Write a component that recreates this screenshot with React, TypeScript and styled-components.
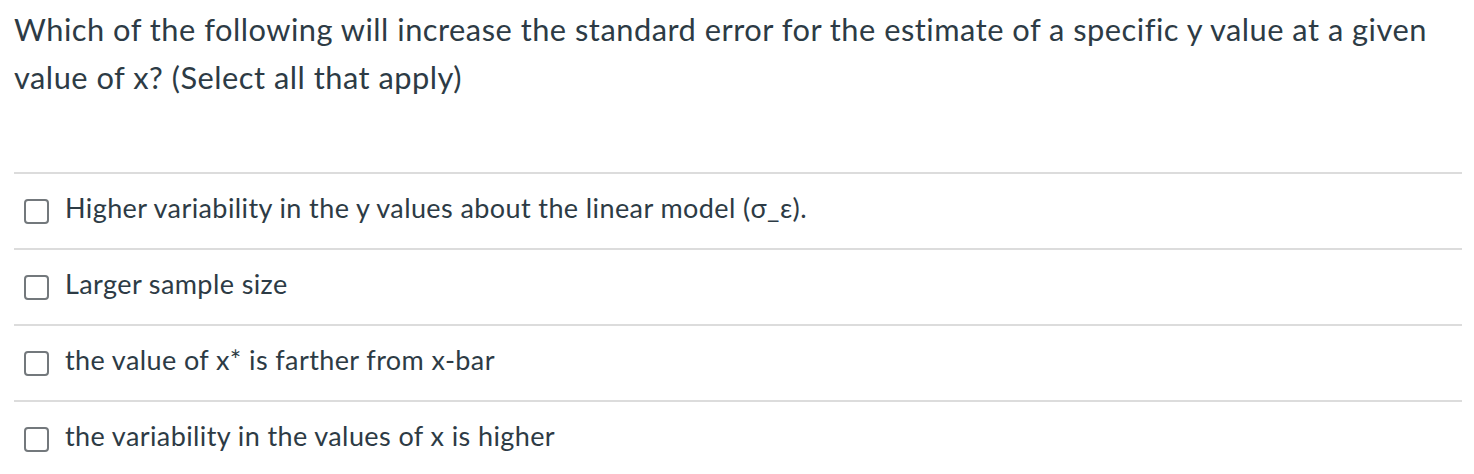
import styled, { createGlobalStyle } from 'styled-components';

const options = [
  'Higher variability in the y values about the linear model (σ_ε).',
  'Larger sample size',
  'the value of x* is farther from x-bar',
  'the variability in the values of x is higher',
];

const GlobalStyle = createGlobalStyle`
  body {
    margin: 0;
    background: #fff;
    font-family: Lato, "Open Sans", sans-serif;
    color: #2d3b45;
  }
`;

const Question = () => {
  return (
    <Wrapper>
      <GlobalStyle />
      <QuestionText>
        Which of the following will increase the standard error for the estimate of a specific y value at a given
        value of x? (Select all that apply)
      </QuestionText>
      <AnswerList>
        {options.map((text, index) => (
          <AnswerRow key={index}>
            <CheckBox type="checkbox" />
            <AnswerLabel>{text}</AnswerLabel>
          </AnswerRow>
        ))}
      </AnswerList>
    </Wrapper>
  );
};

const Wrapper = styled.div`
  padding: 0 12px 0 14px;
`;

const QuestionText = styled.p`
  margin: 0;
  padding-top: 6px;
  font-size: 30.8px;
  line-height: 48px;
  letter-spacing: 0.5px;
`;

const AnswerList = styled.div`
  margin-top: 70px;
  display: flex;
  flex-direction: column;
`;

const AnswerRow = styled.label`
  display: flex;
  align-items: center;
  gap: 16px;
  height: 74px;
  padding-left: 10px;
  border-top: 2px solid #dcdcdc;
`;

const CheckBox = styled.input`
  appearance: none;
  margin: 0;
  width: 25px;
  height: 25px;
  box-sizing: border-box;
  border: 2px solid #73787c;
  border-radius: 4px;
  background: #fff;
  flex-shrink: 0;
`;

const AnswerLabel = styled.span`
  font-size: 27px;
  letter-spacing: 0.4px;
  padding-bottom: 8px;
`;

export default Question;
